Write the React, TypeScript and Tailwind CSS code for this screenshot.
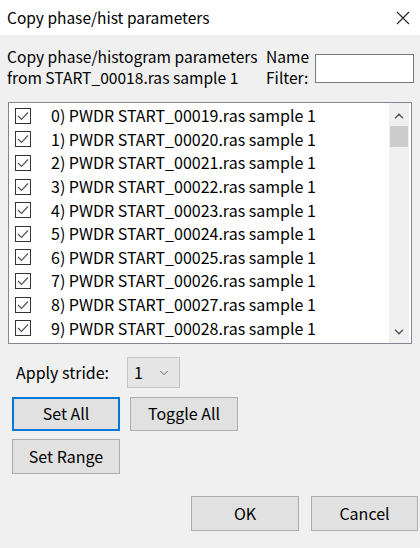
import { ChevronDown, ChevronUp } from "lucide-react";

const rows = Array.from({ length: 10 }, (_, i) => `${i}) PWDR START_000${19 + i}.ras sample 1`);

function Check() {
  return (
    <div className="w-[16px] h-[16px] border border-[#333] bg-white flex items-center justify-center">
      <svg width="12" height="10" viewBox="0 0 12 10">
        <path d="M1 5 L4.5 8.5 L11 1.5" fill="none" stroke="#555" strokeWidth="1.2" />
      </svg>
    </div>
  );
}

function Btn({ label, w, h, focus }: { label: string; w: string; h: string; focus?: boolean }) {
  return (
    <button
      className={`${w} ${h} bg-[#e1e1e1] text-[16px] text-black flex items-center justify-center pb-[2px] ${
        focus ? "border-2 border-[#0078d7]" : "border border-[#adadad]"
      }`}
    >
      {label}
    </button>
  );
}

export default function App() {
  return (
    <div
      className="w-[420px] h-[548px] bg-[#f0f0f0] text-black overflow-hidden"
      style={{ fontFamily: '"Noto Sans CJK SC", "Noto Sans", sans-serif' }}
    >
      <div className="h-[35px] bg-white flex items-center justify-between pl-[7px] pr-[10px]">
        <span className="text-[15.5px]">Copy phase/hist parameters</span>
        <svg width="14" height="14" viewBox="0 0 14 14">
          <path d="M1 1 L13 13 M13 1 L1 13" stroke="#222" strokeWidth="1.1" />
        </svg>
      </div>

      <div className="flex items-start mt-[11px]">
        <div className="ml-[7px] w-[257px] text-[15.6px] leading-[21px] whitespace-nowrap">
          <div>Copy phase/histogram parameters</div>
          <div>from START_00018.ras sample 1</div>
        </div>
        <div className="ml-[2px] w-[42px] text-[15.6px] leading-[21px] text-right whitespace-nowrap">
          <div>Name</div>
          <div className="pr-[4px]">Filter:</div>
        </div>
        <div className="ml-[7px] mt-[8px] w-[99px] h-[29px] bg-white border border-[#7a7a7a]" />
      </div>

      <div className="ml-[8px] mt-[14px] w-[404px] h-[242px] border border-[#828790] bg-white flex">
        <div className="flex-1 pt-[1px]">
          {rows.map((r) => (
            <div key={r} className="h-[23.6px] flex items-center pl-[6px]">
              <Check />
              <span className="ml-[20px] text-[16px] leading-[20px] pb-[1px] whitespace-nowrap">{r}</span>
            </div>
          ))}
        </div>
        <div className="w-[20px] mr-[2px] bg-[#f0f0f0] flex flex-col items-center">
          <ChevronUp size={14} strokeWidth={3} className="text-[#606060] mt-[6px]" />
          <div className="w-[18px] h-[21px] bg-[#cdcdcd] mt-[3px]" />
          <div className="flex-1" />
          <ChevronDown size={14} strokeWidth={3} className="text-[#606060] mb-[4px]" />
        </div>
      </div>

      <div className="flex items-center mt-[13px]">
        <span className="ml-[16px] w-[111px] text-[16px] pb-[2px]">Apply stride:</span>
        <div className="w-[53px] h-[31px] bg-[#e5e5e5] border border-[#c4c4c4] flex items-center justify-between pl-[6px] pr-[8px]">
          <span className="text-[16px] pb-[2px]">1</span>
          <ChevronDown size={14} strokeWidth={1.5} className="text-[#555]" />
        </div>
      </div>

      <div className="flex mt-[9px] ml-[12px] gap-[10px]">
        <Btn label="Set All" w="w-[108px]" h="h-[34px]" focus />
        <Btn label="Toggle All" w="w-[108px]" h="h-[34px]" />
      </div>

      <div className="flex mt-[8px] ml-[12px]">
        <Btn label="Set Range" w="w-[108px]" h="h-[35px]" />
      </div>

      <div className="flex mt-[22px] ml-[191px] gap-[12px]">
        <Btn label="OK" w="w-[108px]" h="h-[35px]" />
        <Btn label="Cancel" w="w-[107px]" h="h-[35px]" />
      </div>
    </div>
  );
}
